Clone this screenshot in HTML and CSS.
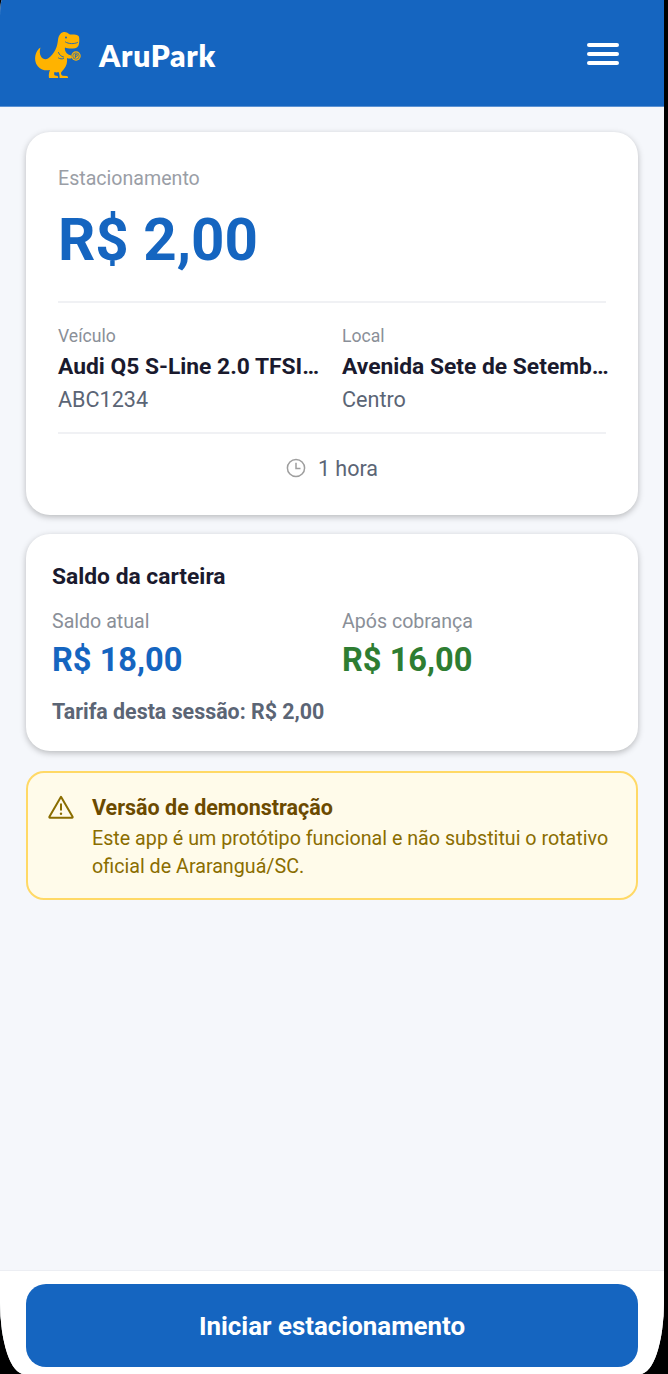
FILE: index.html
```html
<!DOCTYPE html>
<html lang="pt-BR">
<head>
    <meta charset="UTF-8">
    <meta name="viewport" content="width=device-width, initial-scale=1.0">
    <title>AruPark</title>
    <link rel="stylesheet" href="styles.css">
</head>
<body>
    <div class="app">
        <header class="topbar">
            <div class="brand">
                <svg class="logo" viewBox="14 11 48 50" aria-hidden="true">
                    <path fill="#ffb300" d="M38 20C38.500 16 40 13 43.500 12C46 11.500 48 13 50 14.500C53 14.200 57 14.500 58.500 16C59.500 17 59.500 21 59 24C58.500 27 56 28.500 53 28.500C50 28.800 47 28.500 45 27.500C44.500 29 45 31 46.500 33C47.500 34 49 35 51 35.500L52 38C50 39 48 38.500 47 38C47.500 42 46.500 46 44 49C42.500 51 41 52 41 53C41 54.500 41.500 55.500 43 55.800L47 56C48 56.500 48.300 57.500 48 58L39.500 58C39.500 56 39.500 53.500 38.500 52C37 52.500 36 52.500 34.500 52C34 53.500 34 55 35 55.500L37.500 56C38.300 56.500 38.300 57.500 38 58L29 58C28.500 55 29 52 30 50C26 51 21 50 18 46.500C15 43 14.500 38 15.800 34C16.500 31.500 18 29 20.500 27.500C19.500 30.500 19.500 34 21 36.500C22.500 39 25.500 40 28 38.500C31 36.500 34 33 35.500 29.500C37 26.500 37.500 23.500 38 20Z"/>
                    <circle cx="46" cy="17.500" r="1" fill="#1565c0"/>
                    <path fill="none" stroke="#1565c0" stroke-width=".9" stroke-linecap="round" d="M45.500 22C48.500 24 54 24.200 57.500 22.500M38.500 32.500C39.500 35 41 36.500 43.500 37M38.500 38C40 39 42 39.200 43.500 38.500"/>
                    <circle cx="56" cy="36" r="4.700" fill="#ffb300"/>
                    <circle cx="56" cy="36" r="3.200" fill="none" stroke="#1565c0" stroke-width=".7"/>
                    <path fill="none" stroke="#1565c0" stroke-width=".9" d="M55.300 38V34.200H56.300A1.050 1.050 0 0 1 56.300 36.400H55.300"/>
                </svg>
                <span class="brand-name">AruPark</span>
            </div>
            <div class="menu-btn" aria-label="Menu">
                <span></span>
                <span></span>
                <span></span>
            </div>
        </header>

        <main class="content">
            <section class="card card-session">
                <div class="session-label">Estacionamento</div>
                <div class="session-price">R$ 2,00</div>
                <div class="session-details">
                    <div class="detail">
                        <div class="detail-label">Veículo</div>
                        <div class="detail-title">Audi Q5 S-Line 2.0 TFSI…</div>
                        <div class="detail-sub">ABC1234</div>
                    </div>
                    <div class="detail">
                        <div class="detail-label">Local</div>
                        <div class="detail-title">Avenida Sete de Setemb…</div>
                        <div class="detail-sub">Centro</div>
                    </div>
                </div>
                <div class="session-time">
                    <svg class="clock" viewBox="0 0 20 20" aria-hidden="true">
                        <circle cx="10" cy="10" r="8.600"/>
                        <path d="M10 4.800V10.500H14.500"/>
                    </svg>
                    <span>1 hora</span>
                </div>
            </section>

            <section class="card card-wallet">
                <h2>Saldo da carteira</h2>
                <div class="wallet-grid">
                    <div>
                        <div class="wallet-label">Saldo atual</div>
                        <div class="wallet-value">R$ 18,00</div>
                    </div>
                    <div>
                        <div class="wallet-label">Após cobrança</div>
                        <div class="wallet-value wallet-after">R$ 16,00</div>
                    </div>
                </div>
                <div class="wallet-fee">Tarifa desta sessão: R$ 2,00</div>
            </section>

            <section class="notice">
                <svg class="notice-icon" viewBox="0 0 26 24" aria-hidden="true">
                    <path class="tri" d="M13 1.800L24.600 21.800a.6 .6 0 0 1-.5 .9H1.900a.6 .6 0 0 1-.5-.9z"/>
                    <path class="mark" d="M13 8.500V15.500"/>
                    <circle cx="13" cy="18.800" r="1.200"/>
                </svg>
                <div>
                    <div class="notice-title">Versão de demonstração</div>
                    <div class="notice-text">Este app é um protótipo funcional e não substitui o rotativo oficial de Araranguá/SC.</div>
                </div>
            </section>
        </main>

        <footer class="footer">
            <button type="button" class="primary-btn">Iniciar estacionamento</button>
        </footer>
    </div>
</body>
</html>
```

FILE: styles.css
```css
html, body {
    margin: 0;
    padding: 0;
    background-color: #000;
}
body {
    font-family: Roboto, 'Liberation Sans', sans-serif;
    width: 668px;
    height: 1374px;
    overflow: hidden;
}
.app {
    width: 664px;
    height: 1374px;
    display: flex;
    flex-direction: column;
    background-color: #f5f7fb;
    border-radius: 2px 0 24px 24px / 16px 0 72px 72px;
    overflow: hidden;
}
.topbar {
    height: 106px;
    box-sizing: content-box;
    flex-shrink: 0;
    display: flex;
    justify-content: space-between;
    align-items: center;
    padding: 0 45px 0 34px;
    background-color: #1565c0;
    border-bottom: 1px solid #5b92d3;
}
.brand {
    display: flex;
    align-items: center;
    gap: 17px;
    margin-top: 4px;
}
.logo {
    width: 48px;
    height: 50px;
    margin-top: 2px;
}
.brand-name {
    font-family: Lato, sans-serif;
    font-weight: 800;
    font-size: 30px;
    letter-spacing: 0.7px;
    color: #fff;
}
.menu-btn {
    display: flex;
    flex-direction: column;
    gap: 5px;
    margin-top: 2px;
}
.menu-btn span {
    display: block;
    width: 32px;
    height: 4px;
    border-radius: 2px;
    background-color: #fff;
}
.content {
    flex: 1;
    padding: 25px 26px 0;
}
.card {
    background-color: #fff;
    border-radius: 24px;
    box-shadow: 0 2px 6px rgba(0, 0, 0, 0.25);
}
.card-session {
    height: 383px;
    box-sizing: border-box;
    padding: 35px 32px 0;
}
.session-label {
    font-size: 19.600px;
    line-height: 24px;
    color: #9a9ea6;
}
.session-price {
    margin-top: 15px;
    font-size: 58.300px;
    line-height: 68px;
    font-weight: 700;
    color: #1565c0;
}
.session-details {
    margin-top: 27px;
    padding: 24px 0 19px;
    display: grid;
    grid-template-columns: 284px 264px;
    border-top: 2px solid #f0f1f4;
    border-bottom: 2px solid #f0f1f4;
}
.detail-label {
    font-size: 17.600px;
    line-height: 18px;
    color: #8a8f98;
}
.detail-title {
    margin-top: 9px;
    font-size: 22.800px;
    line-height: 26px;
    font-weight: 700;
    color: #1a1a2e;
    white-space: nowrap;
}
.detail-sub {
    margin-top: 7px;
    font-size: 21.600px;
    line-height: 26px;
    color: #5b6575;
}
.session-time {
    margin-top: 20px;
    display: flex;
    justify-content: center;
    align-items: center;
    gap: 12px;
    font-size: 21.500px;
    line-height: 30px;
    color: #5b6575;
}
.clock {
    width: 20px;
    height: 20px;
    fill: none;
    stroke: #9e9e9e;
    stroke-width: 1.500;
    margin-top: -2px;
}
.card-wallet {
    margin-top: 19px;
    height: 217px;
    box-sizing: border-box;
    padding: 30px 26px 0;
}
.card-wallet h2 {
    margin: 0;
    font-size: 22.800px;
    line-height: 26px;
    font-weight: 700;
    color: #1a1a2e;
}
.wallet-grid {
    margin-top: 20px;
    display: grid;
    grid-template-columns: 290px 1fr;
}
.wallet-label {
    font-size: 19.600px;
    line-height: 24px;
    color: #8a8f98;
}
.wallet-value {
    margin-top: 6px;
    font-size: 32.600px;
    line-height: 40px;
    font-weight: 700;
    color: #1565c0;
}
.wallet-after {
    color: #2e7d32;
}
.wallet-fee {
    margin-top: 19px;
    font-size: 21.400px;
    line-height: 26px;
    font-weight: 700;
    color: #5b6575;
}
.notice {
    margin-top: 20px;
    height: 129px;
    box-sizing: border-box;
    display: flex;
    gap: 18px;
    padding: 22px 20px 0 20px;
    background-color: #fffbea;
    border: 2px solid #ffd966;
    border-radius: 18px;
}
.notice-icon {
    width: 26px;
    height: 24px;
    flex-shrink: 0;
    margin-top: 0;
}
.notice-icon .tri {
    fill: none;
    stroke: #8a6d00;
    stroke-width: 2;
    stroke-linejoin: round;
}
.notice-icon .mark {
    fill: none;
    stroke: #8a6d00;
    stroke-width: 2;
}
.notice-icon circle {
    fill: #8a6d00;
}
.notice-title {
    font-size: 21.500px;
    line-height: 26px;
    font-weight: 700;
    color: #6b4a00;
}
.notice-text {
    margin-top: 4px;
    font-size: 19.700px;
    line-height: 28px;
    color: #8a6d00;
}
.footer {
    flex-shrink: 0;
    height: 104px;
    box-sizing: border-box;
    padding: 13px 26px 0;
    background-color: #fff;
    border-top: 1px solid #eceef3;
}
.primary-btn {
    display: block;
    width: 100%;
    height: 83px;
    border: none;
    border-radius: 20px;
    background-color: #1565c0;
    color: #fff;
    font-family: inherit;
    font-size: 25.900px;
    font-weight: 700;
}
```
